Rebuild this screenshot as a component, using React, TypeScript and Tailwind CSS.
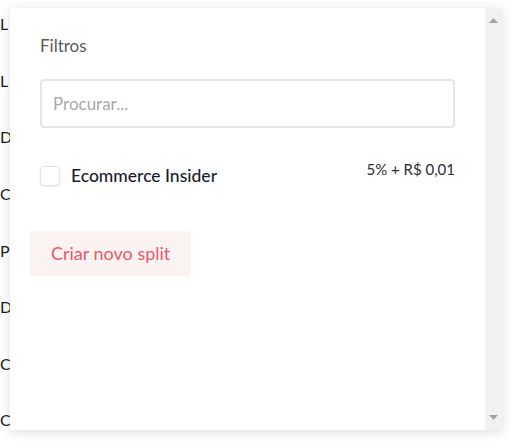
import React from "react";

// Background list rows: only their first letters peek out from under the popover
const rows = ["L", "L", "D", "C", "P", "D", "C", "C"];

function Checkbox() {
  return (
    <span className="inline-block h-[20px] w-[20px] shrink-0 rounded-[4px] border border-[#e3e3e3] bg-white shadow-[0_1px_2px_rgba(0,0,0,0.08)]" />
  );
}

export default function App() {
  return (
    <div className="relative h-[448px] w-[518px] overflow-hidden bg-white font-['Lato',sans-serif]">
      {/* ── Page behind ─────────────────────────────────────────────── */}
      <ul className="-mt-[4px] text-[16px] text-[#1c1c1c]">
        {rows.map((r, i) => (
          <li key={i} className="flex h-[56.6px] items-center">
            {r}
          </li>
        ))}
      </ul>

      {/* ── Filter popover ──────────────────────────────────────────── */}
      <div className="absolute left-[10px] top-[8px] flex h-[422px] w-[492px] overflow-hidden rounded-[4px] shadow-[0_2px_12px_rgba(0,0,0,0.14)]">
        <div className="flex-1 bg-white px-[30px] pt-[26px]">
          <h3 className="text-[17px] leading-6 text-[#5a5a5a]">Filtros</h3>

          <input
            type="text"
            placeholder="Procurar..."
            className="mt-[21px] h-[49px] w-full rounded-[4px] border-2 border-[#e6e6e6] bg-white px-[11px] text-[17px] text-[#333] placeholder:text-[#a9a9a9] focus:outline-none"
          />

          <div className="mt-[35px] flex items-start justify-between">
            <label className="flex items-center gap-[11px]">
              <Checkbox />
              <span className="text-[17.5px] font-medium text-[#1b1d2e]">
                Ecommerce Insider
              </span>
            </label>
            <span className="-mt-[5px] text-[15px] text-[#2b2b35]">5% + R$ 0,01</span>
          </div>

          <button className="-ml-[10px] mt-[42px] h-[45px] rounded-[4px] bg-[#fbf2f2] px-[21px] text-[18px] text-[#f0566b]">
            Criar novo split
          </button>
        </div>

        {/* disabled scrollbar */}
        <div className="flex w-[17px] flex-col items-center justify-between bg-[#f1f1f1] py-[10px]">
          <svg width="9" height="5" viewBox="0 0 9 5">
            <path d="M4.5 0L9 5H0z" fill="#a3a3a3" />
          </svg>
          <svg width="9" height="5" viewBox="0 0 9 5">
            <path d="M0 0h9L4.5 5z" fill="#a3a3a3" />
          </svg>
        </div>
      </div>
    </div>
  );
}
